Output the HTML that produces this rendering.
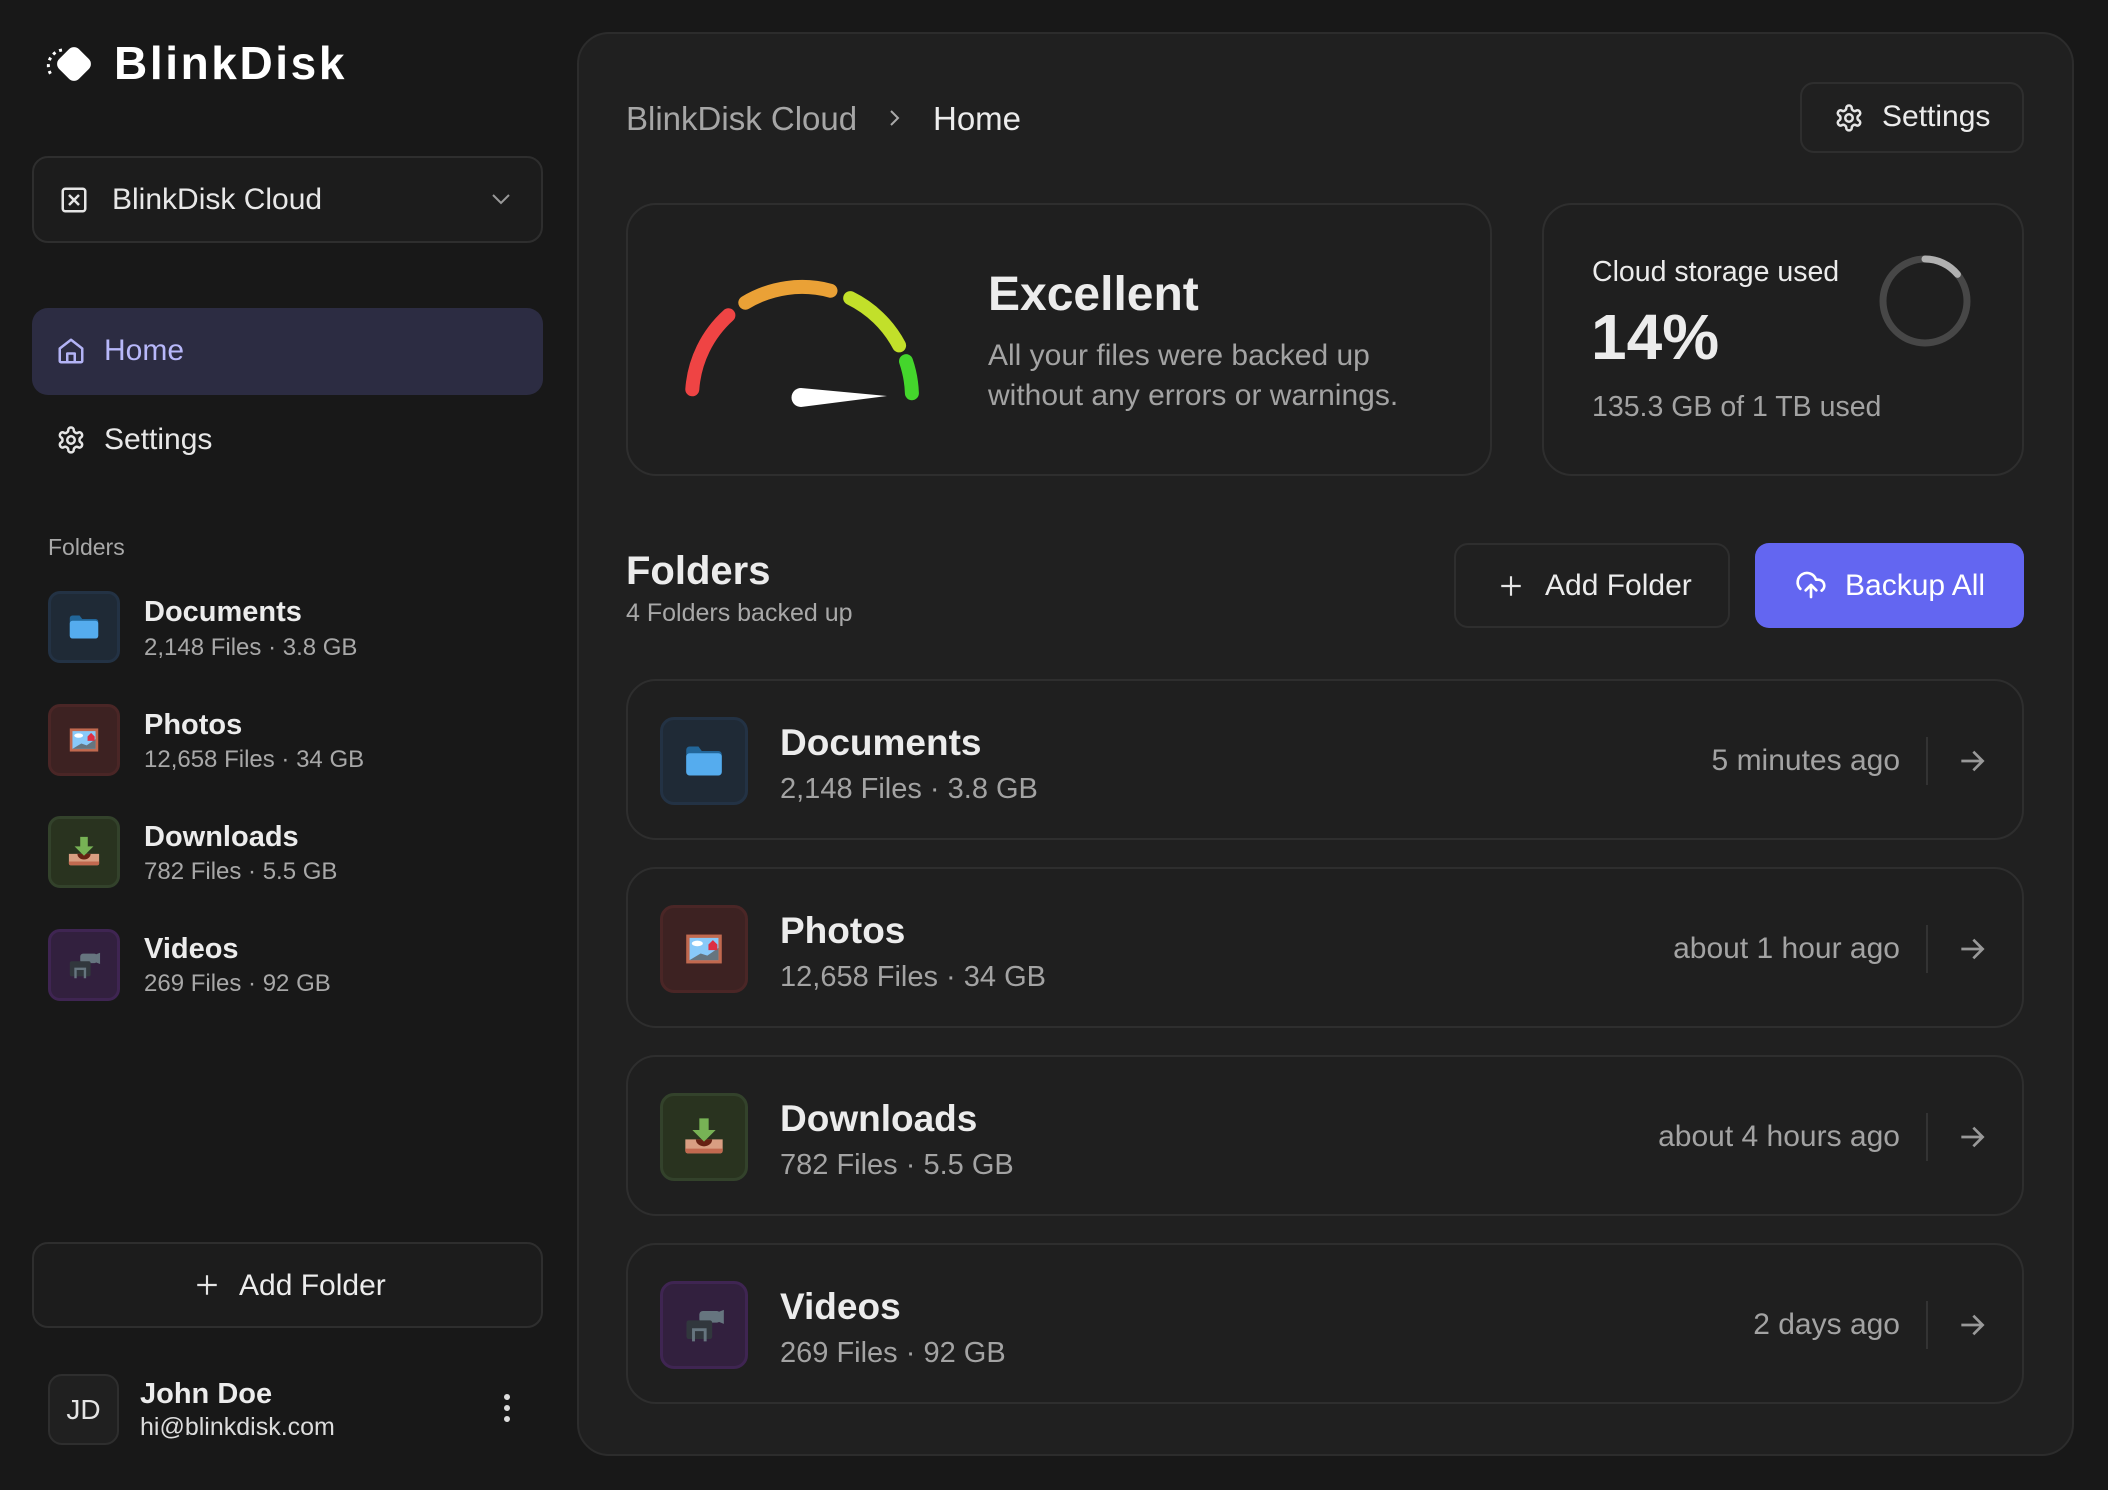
<!DOCTYPE html>
<html><head><meta charset="utf-8"><style>
*{box-sizing:border-box;margin:0;padding:0}
body{width:2108px;height:1490px;background:#181818;font-family:"Liberation Sans",sans-serif;color:#ececec;position:relative;overflow:hidden}
.a{position:absolute}
.box{position:absolute;border:2px solid #2e2e2e;background:#1d1d1d}
.t{position:absolute;white-space:nowrap;line-height:1}
.ib{position:absolute;border-radius:14px;display:flex;align-items:center;justify-content:center;border:3px solid}
.docs{background:#1f2a36;border-color:#233244}
.photo{background:#3d2222;border-color:#4a2626}
.down{background:#29331f;border-color:#33422b}
.vid{background:#32203e;border-color:#3f2552}
.row{position:absolute;left:626px;width:1398px;height:161px;border:2px solid #2e2e2e;border-radius:30px;background:#1f1f1f}
.row .ib{left:32px;top:36px;width:88px;height:88px}
.row .ti{position:absolute;left:152px;top:41px;font-size:37px;font-weight:bold;color:#ececec}
.row .su{position:absolute;left:152px;top:92px;font-size:29px;color:#a3a3a3}
.row .tm{position:absolute;right:122px;top:63px;font-size:30px;color:#a3a3a3;text-align:right}
.row .dv{position:absolute;left:1298px;top:56px;width:2px;height:48px;background:#333}
.row .ar{position:absolute;left:1328px;top:64px}
.si .ib{width:72px;height:72px;left:48px;border-radius:12px}
</style></head><body>

<!-- Logo -->
<svg class="a" style="left:46px;top:44px" width="52" height="40" viewBox="0 0 52 40">
<path d="M16 6 A16 16 0 0 0 6 32" fill="none" stroke="#fff" stroke-width="3" stroke-dasharray="3 4"/>
<rect x="14" y="6" width="28" height="28" rx="7" transform="rotate(45 28 20)" fill="#fff"/>
</svg>
<div class="t" style="left:114px;top:40px;font-size:46px;font-weight:bold;color:#fff;letter-spacing:2.6px">BlinkDisk</div>

<!-- Dropdown -->
<div class="box" style="left:32px;top:156px;width:511px;height:87px;border-radius:16px;background:#1c1c1c"></div>
<svg class="a" style="left:59px;top:185px" width="30" height="30" viewBox="0 0 24 24" fill="none" stroke="#e5e5e5" stroke-width="2"><rect x="3" y="3" width="18" height="18" rx="2"/><path d="M8 8l8 8M16 8l-8 8"/></svg>
<div class="t" style="left:112px;top:185px;font-size:30px;color:#e8e8e8">BlinkDisk Cloud</div>
<svg class="a" style="left:489px;top:189px" width="24" height="20" viewBox="0 0 24 20" fill="none" stroke="#999" stroke-width="2"><path d="M4 6l8 8 8-8"/></svg>

<!-- Nav -->
<div class="a" style="left:32px;top:308px;width:511px;height:87px;border-radius:16px;background:#2c2c42"></div>
<svg class="a" style="left:56px;top:336px" width="30" height="30" viewBox="0 0 24 24" fill="none" stroke="#b3b3f5" stroke-width="2" stroke-linejoin="round"><path d="M3 10l9-7 9 7v10a1 1 0 0 1-1 1H4a1 1 0 0 1-1-1z"/><path d="M9 21v-7h6v7"/></svg>
<div class="t" style="left:104px;top:336px;font-size:30px;color:#b8b8fa">Home</div>
<svg class="a" style="left:56px;top:425px" width="30" height="30" viewBox="0 0 24 24" fill="none" stroke="#e5e5e5" stroke-width="2"><path d="M12.2 2h-.4a2 2 0 0 0-2 2v.2a2 2 0 0 1-1 1.7l-.4.3a2 2 0 0 1-2 0l-.2-.1a2 2 0 0 0-2.7.7l-.2.4a2 2 0 0 0 .7 2.7l.2.1a2 2 0 0 1 1 1.7v.5a2 2 0 0 1-1 1.7l-.2.1a2 2 0 0 0-.7 2.7l.2.4a2 2 0 0 0 2.7.7l.2-.1a2 2 0 0 1 2 0l.4.3a2 2 0 0 1 1 1.7v.2a2 2 0 0 0 2 2h.4a2 2 0 0 0 2-2v-.2a2 2 0 0 1 1-1.7l.4-.3a2 2 0 0 1 2 0l.2.1a2 2 0 0 0 2.7-.7l.2-.4a2 2 0 0 0-.7-2.7l-.2-.1a2 2 0 0 1-1-1.7v-.5a2 2 0 0 1 1-1.7l.2-.1a2 2 0 0 0 .7-2.7l-.2-.4a2 2 0 0 0-2.7-.7l-.2.1a2 2 0 0 1-2 0l-.4-.3a2 2 0 0 1-1-1.7V4a2 2 0 0 0-2-2z"/><circle cx="12" cy="12" r="3"/></svg>
<div class="t" style="left:104px;top:425px;font-size:30px;color:#e8e8e8">Settings</div>

<div class="t" style="left:48px;top:536px;font-size:23px;color:#a8a8a8">Folders</div>

<!-- Sidebar folders -->
<div class="si">
<div class="ib docs" style="top:591px"><svg width="32" height="32" viewBox="0 0 36 36"><path fill="#226699" d="M2 8a3 3 0 0 1 3-3h8l3 4h15a3 3 0 0 1 3 3v16H2z"/><path fill="#55acee" d="M2 14a3 3 0 0 1 3-3h26a3 3 0 0 1 3 3v14a3 3 0 0 1-3 3H5a3 3 0 0 1-3-3z"/></svg></div>
<div class="t" style="left:144px;top:598px;font-size:29px;font-weight:bold">Documents</div>
<div class="t" style="left:144px;top:636px;font-size:24px;color:#a8a8a8">2,148 Files · 3.8 GB</div>

<div class="ib photo" style="top:704px"><svg width="32" height="32" viewBox="0 0 36 36"><rect x="2" y="5" width="32" height="26" fill="#c1694f"/><rect x="5" y="8" width="26" height="20" fill="#88c9f9"/><ellipse cx="12" cy="13" rx="5" ry="2.5" fill="#fff"/><path d="M5 28l10-6 6 2 10-7v11z" fill="#66757f"/><path d="M22 14l4-4 4 4v5h-8z" fill="#dd2e44"/></svg></div>
<div class="t" style="left:144px;top:711px;font-size:29px;font-weight:bold">Photos</div>
<div class="t" style="left:144px;top:748px;font-size:24px;color:#a8a8a8">12,658 Files · 34 GB</div>

<div class="ib down" style="top:816px"><svg width="34" height="34" viewBox="0 0 36 36"><path d="M2 20h32v10a2 2 0 0 1-2 2H4a2 2 0 0 1-2-2z" fill="#d99e82"/><path d="M2 28h32v2a2 2 0 0 1-2 2H4a2 2 0 0 1-2-2z" fill="#c1694f"/><path d="M11 20a7 6 0 0 0 14 0z" fill="#662113"/><path d="M14 2h8v10h6l-10 10-10-10h6z" fill="#77b255"/></svg></div>
<div class="t" style="left:144px;top:823px;font-size:29px;font-weight:bold">Downloads</div>
<div class="t" style="left:144px;top:860px;font-size:24px;color:#a8a8a8">782 Files · 5.5 GB</div>

<div class="ib vid" style="top:929px"><svg width="34" height="34" viewBox="0 0 36 36"><rect x="14" y="6" width="18" height="10" rx="3" fill="#66757f"/><path d="M30 7l5-2v12l-5-2z" fill="#66757f"/><rect x="3" y="14" width="22" height="16" rx="2" fill="#31373d"/><path d="M9 32V22h10v10" fill="none" stroke="#66757f" stroke-width="2.5"/></svg></div>
<div class="t" style="left:144px;top:935px;font-size:29px;font-weight:bold">Videos</div>
<div class="t" style="left:144px;top:972px;font-size:24px;color:#a8a8a8">269 Files · 92 GB</div>
</div>

<!-- Sidebar add folder -->
<div class="box" style="left:32px;top:1242px;width:511px;height:86px;border-radius:16px;background:#1c1c1c"></div>
<svg class="a" style="left:194px;top:1272px" width="26" height="26" viewBox="0 0 24 24" stroke="#e5e5e5" stroke-width="2"><path d="M12 3v18M3 12h18"/></svg>
<div class="t" style="left:239px;top:1271px;font-size:30px;color:#ececec">Add Folder</div>

<!-- User -->
<div class="box" style="left:48px;top:1374px;width:71px;height:71px;border-radius:14px;background:#202020"></div>
<div class="t" style="left:48px;top:1396px;width:71px;text-align:center;font-size:28px;color:#e5e5e5">JD</div>
<div class="t" style="left:140px;top:1380px;font-size:29px;font-weight:bold">John Doe</div>
<div class="t" style="left:140px;top:1415px;font-size:25px;color:#dcdcdc">hi@blinkdisk.com</div>
<svg class="a" style="left:500px;top:1392px" width="14" height="32" viewBox="0 0 14 32" fill="#ddd"><circle cx="7" cy="5" r="3"/><circle cx="7" cy="16" r="3"/><circle cx="7" cy="27" r="3"/></svg>

<!-- Main panel -->
<div class="a" style="left:577px;top:32px;width:1497px;height:1424px;border-radius:32px;background:#202020;border:2px solid #2c2c2c"></div>

<div class="t" style="left:626px;top:102px;font-size:33px;color:#a6a6a6">BlinkDisk Cloud</div>
<svg class="a" style="left:884px;top:106px" width="22" height="24" viewBox="0 0 22 24" fill="none" stroke="#aaa" stroke-width="2"><path d="M7 5l7 7-7 7"/></svg>
<div class="t" style="left:933px;top:102px;font-size:33px;color:#ececec">Home</div>

<div class="box" style="left:1800px;top:82px;width:224px;height:71px;border-radius:14px;background:#202020"></div>
<svg class="a" style="left:1834px;top:103px" width="30" height="30" viewBox="0 0 24 24" fill="none" stroke="#e5e5e5" stroke-width="2"><path d="M12.2 2h-.4a2 2 0 0 0-2 2v.2a2 2 0 0 1-1 1.7l-.4.3a2 2 0 0 1-2 0l-.2-.1a2 2 0 0 0-2.7.7l-.2.4a2 2 0 0 0 .7 2.7l.2.1a2 2 0 0 1 1 1.7v.5a2 2 0 0 1-1 1.7l-.2.1a2 2 0 0 0-.7 2.7l.2.4a2 2 0 0 0 2.7.7l.2-.1a2 2 0 0 1 2 0l.4.3a2 2 0 0 1 1 1.7v.2a2 2 0 0 0 2 2h.4a2 2 0 0 0 2-2v-.2a2 2 0 0 1 1-1.7l.4-.3a2 2 0 0 1 2 0l.2.1a2 2 0 0 0 2.7-.7l.2-.4a2 2 0 0 0-.7-2.7l-.2-.1a2 2 0 0 1-1-1.7v-.5a2 2 0 0 1 1-1.7l.2-.1a2 2 0 0 0 .7-2.7l-.2-.4a2 2 0 0 0-2.7-.7l-.2.1a2 2 0 0 1-2 0l-.4-.3a2 2 0 0 1-1-1.7V4a2 2 0 0 0-2-2z"/><circle cx="12" cy="12" r="3"/></svg>
<div class="t" style="left:1882px;top:102px;font-size:30px;color:#ececec">Settings</div>

<!-- Gauge card -->
<div class="box" style="left:626px;top:203px;width:866px;height:273px;border-radius:30px;background:#1f1f1f"></div>
<svg class="a" style="left:680px;top:260px" width="250" height="170" viewBox="0 0 250 170" fill="none" stroke-width="14" stroke-linecap="round">
<path d="M12.3 129.3 A110 110 0 0 1 48.4 55.3" stroke="#ef4444"/>
<path d="M65.3 42.7 A110 110 0 0 1 150.5 30.7" stroke="#eaa136"/>
<path d="M170.2 38.1 A110 110 0 0 1 219.1 85.4" stroke="#c2e02a"/>
<path d="M226 101.2 A110 110 0 0 1 231.9 133.2" stroke="#44d62c"/>
<path d="M121 128 L207 136 L121 147 A9.5 9.5 0 0 1 121 128 Z" fill="#fff" stroke="none"/>
</svg>
<div class="t" style="left:988px;top:271px;font-size:48px;font-weight:bold;color:#ececec">Excellent</div>
<div class="t" style="left:988px;top:341px;font-size:30px;color:#a3a3a3">All your files were backed up</div>
<div class="t" style="left:988px;top:381px;font-size:30px;color:#a3a3a3">without any errors or warnings.</div>

<!-- Storage card -->
<div class="box" style="left:1542px;top:203px;width:482px;height:273px;border-radius:30px;background:#1f1f1f"></div>
<div class="t" style="left:1592px;top:258px;font-size:28.5px;color:#ececec">Cloud storage used</div>
<div class="t" style="left:1591px;top:305px;font-size:64px;font-weight:bold;color:#ececec">14%</div>
<div class="t" style="left:1592px;top:393px;font-size:28.5px;color:#a3a3a3">135.3 GB of 1 TB used</div>
<svg class="a" style="left:1875px;top:251px" width="100" height="100" viewBox="0 0 100 100" fill="none" stroke-width="7">
<circle cx="50" cy="50" r="42" stroke="#474747"/>
<circle cx="50" cy="50" r="42" stroke="#b0b0b0" stroke-dasharray="37 300" stroke-linecap="round" transform="rotate(-90 50 50)"/>
</svg>

<!-- Folders header -->
<div class="t" style="left:626px;top:551px;font-size:40px;font-weight:bold;color:#ececec">Folders</div>
<div class="t" style="left:626px;top:601px;font-size:25px;color:#a8a8a8">4 Folders backed up</div>

<div class="box" style="left:1454px;top:543px;width:276px;height:85px;border-radius:14px;background:#202020"></div>
<svg class="a" style="left:1498px;top:573px" width="26" height="26" viewBox="0 0 24 24" stroke="#e5e5e5" stroke-width="2"><path d="M12 3v18M3 12h18"/></svg>
<div class="t" style="left:1545px;top:571px;font-size:30px;color:#ececec">Add Folder</div>

<div class="a" style="left:1755px;top:543px;width:269px;height:85px;border-radius:14px;background:#6366f1"></div>
<svg class="a" style="left:1795px;top:569px" width="32" height="32" viewBox="0 0 24 24" fill="none" stroke="#fff" stroke-width="2" stroke-linecap="round" stroke-linejoin="round"><path d="M4 14.9A7 7 0 1 1 15.7 8h1.8a4.5 4.5 0 0 1 2.5 8.2"/><path d="M12 12v9M8 16l4-4 4 4"/></svg>
<div class="t" style="left:1845px;top:571px;font-size:30px;color:#fff">Backup All</div>

<!-- Rows -->
<div class="row" style="top:679px">
<div class="ib docs"><svg width="40" height="40" viewBox="0 0 36 36"><path fill="#226699" d="M2 8a3 3 0 0 1 3-3h8l3 4h15a3 3 0 0 1 3 3v16H2z"/><path fill="#55acee" d="M2 14a3 3 0 0 1 3-3h26a3 3 0 0 1 3 3v14a3 3 0 0 1-3 3H5a3 3 0 0 1-3-3z"/></svg></div>
<div class="ti">Documents</div><div class="su">2,148 Files · 3.8 GB</div>
<div class="tm">5 minutes ago</div><div class="dv"></div>
<svg class="ar" width="32" height="32" viewBox="0 0 24 24" fill="none" stroke="#999" stroke-width="2"><path d="M4 12h16M13 5l7 7-7 7"/></svg>
</div>

<div class="row" style="top:867px">
<div class="ib photo"><svg width="40" height="40" viewBox="0 0 36 36"><rect x="2" y="5" width="32" height="26" fill="#c1694f"/><rect x="5" y="8" width="26" height="20" fill="#88c9f9"/><ellipse cx="12" cy="13" rx="5" ry="2.5" fill="#fff"/><path d="M5 28l10-6 6 2 10-7v11z" fill="#66757f"/><path d="M22 14l4-4 4 4v5h-8z" fill="#dd2e44"/></svg></div>
<div class="ti">Photos</div><div class="su">12,658 Files · 34 GB</div>
<div class="tm">about 1 hour ago</div><div class="dv"></div>
<svg class="ar" width="32" height="32" viewBox="0 0 24 24" fill="none" stroke="#999" stroke-width="2"><path d="M4 12h16M13 5l7 7-7 7"/></svg>
</div>

<div class="row" style="top:1055px">
<div class="ib down"><svg width="42" height="42" viewBox="0 0 36 36"><path d="M2 20h32v10a2 2 0 0 1-2 2H4a2 2 0 0 1-2-2z" fill="#d99e82"/><path d="M2 28h32v2a2 2 0 0 1-2 2H4a2 2 0 0 1-2-2z" fill="#c1694f"/><path d="M11 20a7 6 0 0 0 14 0z" fill="#662113"/><path d="M14 2h8v10h6l-10 10-10-10h6z" fill="#77b255"/></svg></div>
<div class="ti">Downloads</div><div class="su">782 Files · 5.5 GB</div>
<div class="tm">about 4 hours ago</div><div class="dv"></div>
<svg class="ar" width="32" height="32" viewBox="0 0 24 24" fill="none" stroke="#999" stroke-width="2"><path d="M4 12h16M13 5l7 7-7 7"/></svg>
</div>

<div class="row" style="top:1243px">
<div class="ib vid"><svg width="42" height="42" viewBox="0 0 36 36"><rect x="14" y="6" width="18" height="10" rx="3" fill="#66757f"/><path d="M30 7l5-2v12l-5-2z" fill="#66757f"/><rect x="3" y="14" width="22" height="16" rx="2" fill="#31373d"/><path d="M9 32V22h10v10" fill="none" stroke="#66757f" stroke-width="2.5"/></svg></div>
<div class="ti">Videos</div><div class="su">269 Files · 92 GB</div>
<div class="tm">2 days ago</div><div class="dv"></div>
<svg class="ar" width="32" height="32" viewBox="0 0 24 24" fill="none" stroke="#999" stroke-width="2"><path d="M4 12h16M13 5l7 7-7 7"/></svg>
</div>

</body></html>
